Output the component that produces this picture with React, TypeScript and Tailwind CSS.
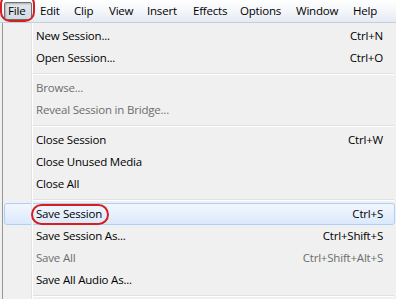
import React from "react";

type Item = { label: string; shortcut?: string; disabled?: boolean; highlight?: boolean } | "sep";

const items: Item[] = [
  { label: "New Session...", shortcut: "Ctrl+N" },
  { label: "Open Session...", shortcut: "Ctrl+O" },
  "sep",
  { label: "Browse...", disabled: true },
  { label: "Reveal Session in Bridge...", disabled: true },
  "sep",
  { label: "Close Session", shortcut: "Ctrl+W" },
  { label: "Close Unused Media" },
  { label: "Close All" },
  "sep",
  { label: "Save Session", shortcut: "Ctrl+S", highlight: true },
  { label: "Save Session As...", shortcut: "Ctrl+Shift+S" },
  { label: "Save All", shortcut: "Ctrl+Shift+Alt+S", disabled: true },
  { label: "Save All Audio As..." },
  "sep",
];

const menus: { label: string; w: string }[] = [
  { label: "Edit", w: "w-[34px]" },
  { label: "Clip", w: "w-[35px]" },
  { label: "View", w: "w-[38px]" },
  { label: "Insert", w: "w-[46px]" },
  { label: "Effects", w: "w-[47px]" },
  { label: "Options", w: "w-[56px]" },
  { label: "Window", w: "w-[57px]" },
  { label: "Help", w: "w-[40px]" },
];

export default function App() {
  return (
    <div
      className="relative w-[396px] h-[299px] overflow-hidden bg-[#f0f0f0] text-[11.5px] tracking-[-0.2px] text-black"
      style={{ fontFamily: '"Open Sans", "Noto Sans", sans-serif' }}
    >
      {/* menubar */}
      <div className="h-[23px] flex items-center bg-gradient-to-b from-[#ffffff] via-[#f4f6fa] to-[#e4eaf3] border-b border-[#c5cfdc] pl-[4px]">
        <div className="h-[18px] w-[28px] pl-[3px] flex items-center border border-[#707070] rounded-[2px] bg-gradient-to-b from-[#e4e8ee] to-[#d4dae3] shadow-[inset_1px_1px_2px_rgba(0,0,0,0.25)]">
          File
        </div>
        <div className="flex ml-[8px]">
          {menus.map((m) => (
            <div key={m.label} className={"leading-[18px] shrink-0 " + m.w}>
              {m.label}
            </div>
          ))}
        </div>
      </div>

      {/* dropdown */}
      <div className="ml-[2px] border-l border-[#979797] bg-[#f0f0f0] relative">
        <div className="absolute left-[28px] top-0 bottom-0 border-l border-[#e2e3e3] border-r border-r-white w-[2px]" />
        <div className="pt-[2px]">
          {items.map((it, i) =>
            it === "sep" ? (
              <div key={i} className="h-[8px] pt-[4px] pl-[30px] pr-[2px]">
                <div className="w-full h-[2px] border-t border-[#e0e0e0] border-b border-b-white" />
              </div>
            ) : (
              <div
                key={i}
                className={
                  "h-[22px] flex items-center pl-[31px] pr-[11px] mx-[1px] " +
                  (it.highlight
                    ? "rounded-[3px] border border-[#aecff7] bg-gradient-to-b from-[#f2f7fe] to-[#dbe9fb]"
                    : "border border-transparent") +
                  (it.disabled ? " text-[#6d6d6d]" : "")
                }
              >
                <span className="flex-1">{it.label}</span>
                {it.shortcut && <span>{it.shortcut}</span>}
              </div>
            )
          )}
        </div>
      </div>

      {/* red annotation ellipses */}
      <div className="absolute left-[0px] top-[-6px] w-[35px] h-[28px] border-2 border-[#d42020] rounded-[10px]" />
      <div className="absolute left-[31px] top-[204px] w-[78px] h-[21px] border-2 border-[#d42020] rounded-[11px]" />
    </div>
  );
}
